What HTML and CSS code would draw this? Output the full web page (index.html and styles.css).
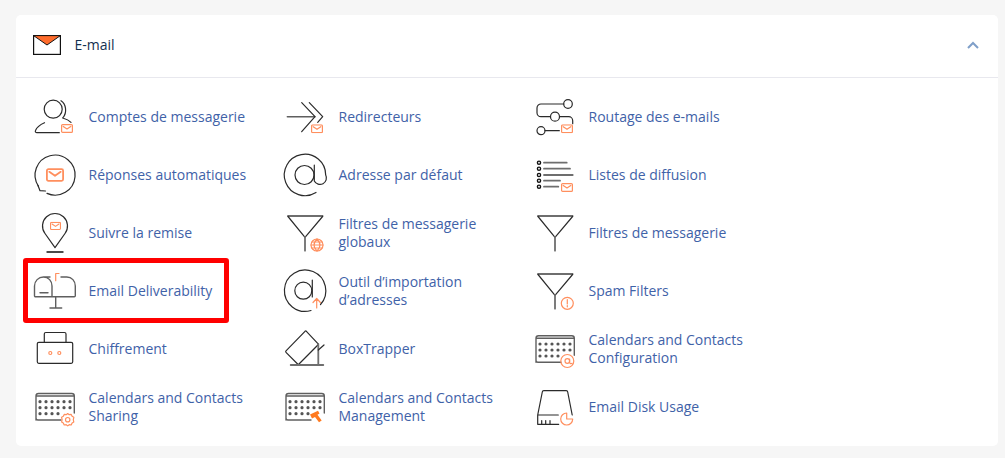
FILE: index.html
```html
<!DOCTYPE html>
<html lang="fr">
<head>
	<meta charset="UTF-8">
	<meta name="viewport" content="width=device-width">
	<title>E-mail</title>
	<link rel="stylesheet" href="styles.css">
</head>
<body>

<svg class="defs" width="0" height="0" aria-hidden="true">
	<symbol id="env" viewBox="0 0 12 9">
		<rect class="or" x="0.6" y="0.6" width="10.8" height="7.8" rx="1"/>
		<path class="or" d="M2.2 2.4 6 5l3.8-2.6"/>
	</symbol>
	<symbol id="funnel" viewBox="0 0 50 50">
		<path class="gr2" d="M8 9h34.6"/>
		<path class="ln" d="M8 9.5 25 30.3 42.6 9.5"/>
		<path class="gr2" d="M25 30v13.7"/>
	</symbol>
	<symbol id="cal" viewBox="0 0 50 50">
		<path class="gr" d="M6 39V15a2.5 2.5 0 0 1 2.5-2.5h33.3a2.500 2.500 0 0 1 2.500 2.500v17M6 15h38.300M6 37a2 2 0 0 0 2 2h23"/>
		<g class="dots">
			<circle cx="10" cy="20.700" r="1.600"/><circle cx="16" cy="20.700" r="1.600"/><circle cx="22" cy="20.700" r="1.600"/><circle cx="28" cy="20.700" r="1.600"/><circle cx="34" cy="20.700" r="1.600"/><circle cx="40" cy="20.700" r="1.600"/>
			<circle cx="10" cy="26.700" r="1.600"/><circle cx="16" cy="26.700" r="1.600"/><circle cx="22" cy="26.700" r="1.600"/><circle cx="28" cy="26.700" r="1.600"/><circle cx="34" cy="26.700" r="1.600"/><circle cx="40" cy="26.700" r="1.600"/>
			<circle cx="10" cy="32.700" r="1.600"/><circle cx="16" cy="32.700" r="1.600"/><circle cx="22" cy="32.700" r="1.600"/><circle cx="28" cy="32.700" r="1.600"/>
		</g>
	</symbol>
</svg>

<section class="card">
	<header class="card-head">
		<svg class="head-icon" width="28" height="20" viewBox="0 0 28 20">
			<rect x="0.600" y="0.600" width="26.800" height="18.800" fill="#fff" stroke="#111" stroke-width="1.200"/>
			<path d="M0.600 0.600h26.800L14 10z" fill="#ff6c2c" stroke="#111" stroke-width="1"/>
		</svg>
		<h2 class="card-title">E-mail</h2>
		<svg class="chevron" width="12" height="8" viewBox="0 0 12 8"><path d="M1 7l5-5 5 5" fill="none" stroke="#7f9fc9" stroke-width="2"/></svg>
	</header>

	<div class="tools">
		<a class="tool" href="#">
			<svg class="icon" viewBox="0 0 50 50">
				<circle class="ln" cx="23.200" cy="18.200" r="9"/>
				<path class="ln" d="M31 9.700c5 3 6.500 12 1.700 17.300 3.500 1 6.500 2.500 8.300 4.300"/>
				<path class="ln" d="M29.300 41.700H7c-1.500 0-2-1-1.500-2.200 1.500-4 6-6.500 9-7.800"/>
				<use href="#env" x="31" y="33" width="12" height="9"/>
			</svg>
			<span class="tool-name">Comptes de messagerie</span>
		</a>
		<a class="tool" href="#">
			<svg class="icon" viewBox="0 0 50 50">
				<path class="gr" d="M7.300 25.700H35"/>
				<path class="ln" d="M21.700 11.700 35 25.700l-13.300 15M29.300 11.700l13.400 14-5 5.600"/>
				<use href="#env" x="31" y="33.300" width="12" height="9"/>
			</svg>
			<span class="tool-name">Redirecteurs</span>
		</a>
		<a class="tool" href="#">
			<svg class="icon" viewBox="0 0 50 50">
				<circle class="ln" cx="38" cy="13" r="4.300"/>
				<circle class="ln" cx="25" cy="25.700" r="4.500"/>
				<circle class="ln" cx="11" cy="39.700" r="4"/>
				<path class="ln" d="M33.700 13H11a4 4 0 0 0-4 4v4.700a4 4 0 0 0 4 4h9.500M29.500 25.700H38.700a4 4 0 0 1 4 4v3M15 39.700h14.300"/>
				<use href="#env" x="31" y="33.300" width="12" height="9"/>
			</svg>
			<span class="tool-name">Routage des e-mails</span>
		</a>

		<a class="tool" href="#">
			<svg class="icon" viewBox="0 0 50 50">
				<path class="ln" d="M17 44.400A20 20 0 1 0 8.500 37.300"/>
				<path class="ln" d="M8 36.500l2 5.200 5.500.3"/>
				<use href="#env" x="16" y="19" width="18" height="14"/>
			</svg>
			<span class="tool-name">Réponses automatiques</span>
		</a>
		<a class="tool" href="#">
			<svg class="icon" viewBox="0 0 50 50">
				<circle class="ln" cx="24.500" cy="26" r="9.500"/>
				<path class="ln" d="M34.300 16v16a5.700 5.700 0 0 0 11.400-6A20.700 20.700 0 1 0 36 43.500"/>
			</svg>
			<span class="tool-name">Adresse par défaut</span>
		</a>
		<a class="tool" href="#">
			<svg class="icon" viewBox="0 0 50 50">
				<g class="ln2">
					<circle cx="9" cy="13.700" r="1.600"/><circle cx="9" cy="19.700" r="1.600"/><circle cx="9" cy="26" r="1.600"/><circle cx="9" cy="31.700" r="1.600"/><circle cx="9" cy="37.700" r="1.600"/>
				</g>
				<path class="gr2" d="M14 13.700h22.700M14 19.700h26M14 26h28.700M14 31.700h16M14 37.700h14.300"/>
				<use href="#env" x="31" y="34" width="12" height="9"/>
			</svg>
			<span class="tool-name">Listes de diffusion</span>
		</a>

		<a class="tool" href="#">
			<svg class="icon" viewBox="0 0 50 50">
				<path class="ln" d="M25 40.700 15 26.500a12.500 12.500 0 1 1 20 0z"/>
				<path class="ln2" d="M17 45h16"/>
				<use href="#env" x="20" y="14.700" width="11" height="8.500"/>
			</svg>
			<span class="tool-name">Suivre la remise</span>
		</a>
		<a class="tool" href="#">
			<svg class="icon" viewBox="0 0 50 50">
				<use href="#funnel" width="50" height="50"/>
				<circle class="or" cx="37" cy="38" r="6"/>
				<path class="or" d="M31 38h12M37 32c-4 4-4 8 0 12M37 32c4 4 4 8 0 12M32 35h10M32 41h10"/>
			</svg>
			<span class="tool-name">Filtres de messagerie globaux</span>
		</a>
		<a class="tool" href="#">
			<svg class="icon" viewBox="0 0 50 50">
				<use href="#funnel" width="50" height="50"/>
			</svg>
			<span class="tool-name">Filtres de messagerie</span>
		</a>

		<a class="tool tool-marked" href="#">
			<svg class="icon" viewBox="0 0 50 50">
				<path class="gr" d="M22 31.700H5.500a1 1 0 0 1-1-1V21c0-5 4-9 9-9s8.500 4 8.500 9v10.700h22.300a1 1 0 0 0 1-1V21c0-5-3.500-9-8.500-9H31M13.500 12H20"/>
				<path class="gr" d="M25.700 31.700V43M20 43h11.700M10 27.700h8"/>
				<path class="or" d="M25.700 15.700V8.500H29"/>
			</svg>
			<span class="tool-name">Email Deliverability</span>
		</a>
		<a class="tool" href="#">
			<svg class="icon" viewBox="0 0 50 50">
				<circle class="ln" cx="23.300" cy="25.700" r="8.500"/>
				<path class="ln" d="M32.300 15v17"/>
				<path class="ln" d="M31 45.500A20.700 20.700 0 1 1 40.500 39.500"/>
				<path class="or" d="M36.700 43V33.500M33 37.500l3.700-4 3.700 4"/>
			</svg>
			<span class="tool-name">Outil d’importation d’adresses</span>
		</a>
		<a class="tool" href="#">
			<svg class="icon" viewBox="0 0 50 50">
				<use href="#funnel" width="50" height="50"/>
				<circle class="or" cx="37.300" cy="38.300" r="6"/>
				<path class="or" d="M37.300 34.500v4.500M37.300 40.500v1.300"/>
			</svg>
			<span class="tool-name">Spam Filters</span>
		</a>

		<a class="tool" href="#">
			<svg class="icon" viewBox="0 0 50 50">
				<rect class="ln" x="7.300" y="19.300" width="35.400" height="21" rx="1.500"/>
				<path class="ln" d="M14.300 19V11a1.500 1.500 0 0 1 1.500-1.500h18.700A1.500 1.500 0 0 1 36 11v8"/>
				<circle class="or" cx="20.300" cy="30" r="1.500"/>
				<circle class="or" cx="29.300" cy="30" r="1.500"/>
			</svg>
			<span class="tool-name">Chiffrement</span>
		</a>
		<a class="tool" href="#">
			<svg class="icon" viewBox="0 0 50 50">
				<path class="ln" d="M25 8.300a1 1 0 0 1 1.400 0l11.500 12.300a1 1 0 0 1 0 1.400L19 41a1 1 0 0 1-1.400 0L6 29.300a1 1 0 0 1 0-1.400z"/>
				<path class="gr2" d="M38.300 21v21M10.700 42h32.600"/>
				<path class="ln" d="M38.300 27 44 22"/>
			</svg>
			<span class="tool-name">BoxTrapper</span>
		</a>
		<a class="tool" href="#">
			<svg class="icon" viewBox="0 0 50 50">
				<use href="#cal" width="50" height="50" y="0.300"/>
				<circle class="or" cx="37.300" cy="38" r="6.500"/>
				<circle class="or" cx="37.300" cy="38" r="2.300"/>
				<path class="or" d="M39.600 36v3.300c0 1.500 1.700 1.500 2.500 1"/>
			</svg>
			<span class="tool-name">Calendars and Contacts Configuration</span>
		</a>

		<a class="tool" href="#">
			<svg class="icon" viewBox="0 0 50 50">
				<use href="#cal" width="50" height="50"/>
				<path class="or" d="M37.700 32.500l1.500 1.200 2-.3.900 1.900 1.700 1-.5 2.400.5 2.400-1.700 1-.9 1.900-2-.3-1.500 1.200-1.500-1.200-2 .3-.9-1.900-1.700-1 .5-2.400-.5-2.400 1.700-1 .9-1.900 2 .3z"/>
				<circle class="or" cx="37.700" cy="38.700" r="2.200"/>
			</svg>
			<span class="tool-name">Calendars and Contacts Sharing</span>
		</a>
		<a class="tool" href="#">
			<svg class="icon" viewBox="0 0 50 50">
				<use href="#cal" width="50" height="50"/>
				<path class="hammer" d="M30 33.500 38 29.700l1.500 2.800-2 1.300 4.200 5.700-2.700 1.800-4-5.300-3 1.500z"/>
			</svg>
			<span class="tool-name">Calendars and Contacts Management</span>
		</a>
		<a class="tool" href="#">
			<svg class="icon" viewBox="0 0 50 50">
				<path class="ln" d="M7.700 43.300h21M7.700 34h20.600M7.700 43.300V34l4.600-23a1.500 1.500 0 0 1 1.500-1.300h22.400A1.500 1.500 0 0 1 37.700 11l4.500 23"/>
				<path class="ln" d="M11.700 43v-3.500M15.700 43v-3.500M20 43v-3.500"/>
				<path class="or" d="M36.700 38V32a6 6 0 1 0 6 6z"/>
			</svg>
			<span class="tool-name">Email Disk Usage</span>
		</a>
	</div>
</section>

</body>
</html>
```

FILE: styles.css
```css
* { box-sizing: border-box; }

html, body {
	margin: 0;
	height: 100%;
}

body {
	background: #f6f6f6;
	padding: 15px 7px 0 16px;
	font-family: "Open Sans", "Noto Sans", sans-serif;
	font-size: 14px;
	overflow: hidden;
}

.defs { position: absolute; }

.card {
	background: #fff;
	border-radius: 5px;
	height: 431px;
}

.card-head {
	display: flex;
	align-items: center;
	height: 63px;
	padding: 0 19px 3px 17px;
	border-bottom: 1px solid #e8e8ee;
}

.head-icon { flex: none; }

.card-title {
	flex: 1;
	margin: 0 0 0 13.500px;
	font-size: 14px;
	font-weight: 400;
	color: #14304f;
}

.tools {
	display: grid;
	grid-template-columns: repeat(3, 250px);
	grid-auto-rows: 58px;
	padding: 9px 0 0 14px;
}

.tool {
	position: relative;
	display: flex;
	align-items: center;
	gap: 8.500px;
	text-decoration: none;
	color: #3f62a8;
	line-height: 18px;
}

.tool-name {
	max-width: 172px;
	padding-top: 2px;
}

.icon {
	flex: none;
	width: 50px;
	height: 50px;
}

.tool-marked::after {
	content: "";
	position: absolute;
	top: -3px;
	bottom: -4px;
	left: -7px;
	right: 51px;
	border: 5px solid #f00;
	border-radius: 3px;
}

.ln, .ln2, .gr, .gr2, .or { fill: none; stroke-linecap: round; stroke-linejoin: round; }
.ln { stroke: #2b2b2b; stroke-width: 1.2; }
.ln2 { stroke: #111; stroke-width: 1.4; fill: none; }
.gr { stroke: #5f5f5f; stroke-width: 1.4; }
.gr2 { stroke: #6e6e6e; stroke-width: 1.800; }
.or { stroke: #ff8f5e; stroke-width: 1.200; }
.dots { fill: #555; }
.hammer { fill: #ff7a1f; }
```
